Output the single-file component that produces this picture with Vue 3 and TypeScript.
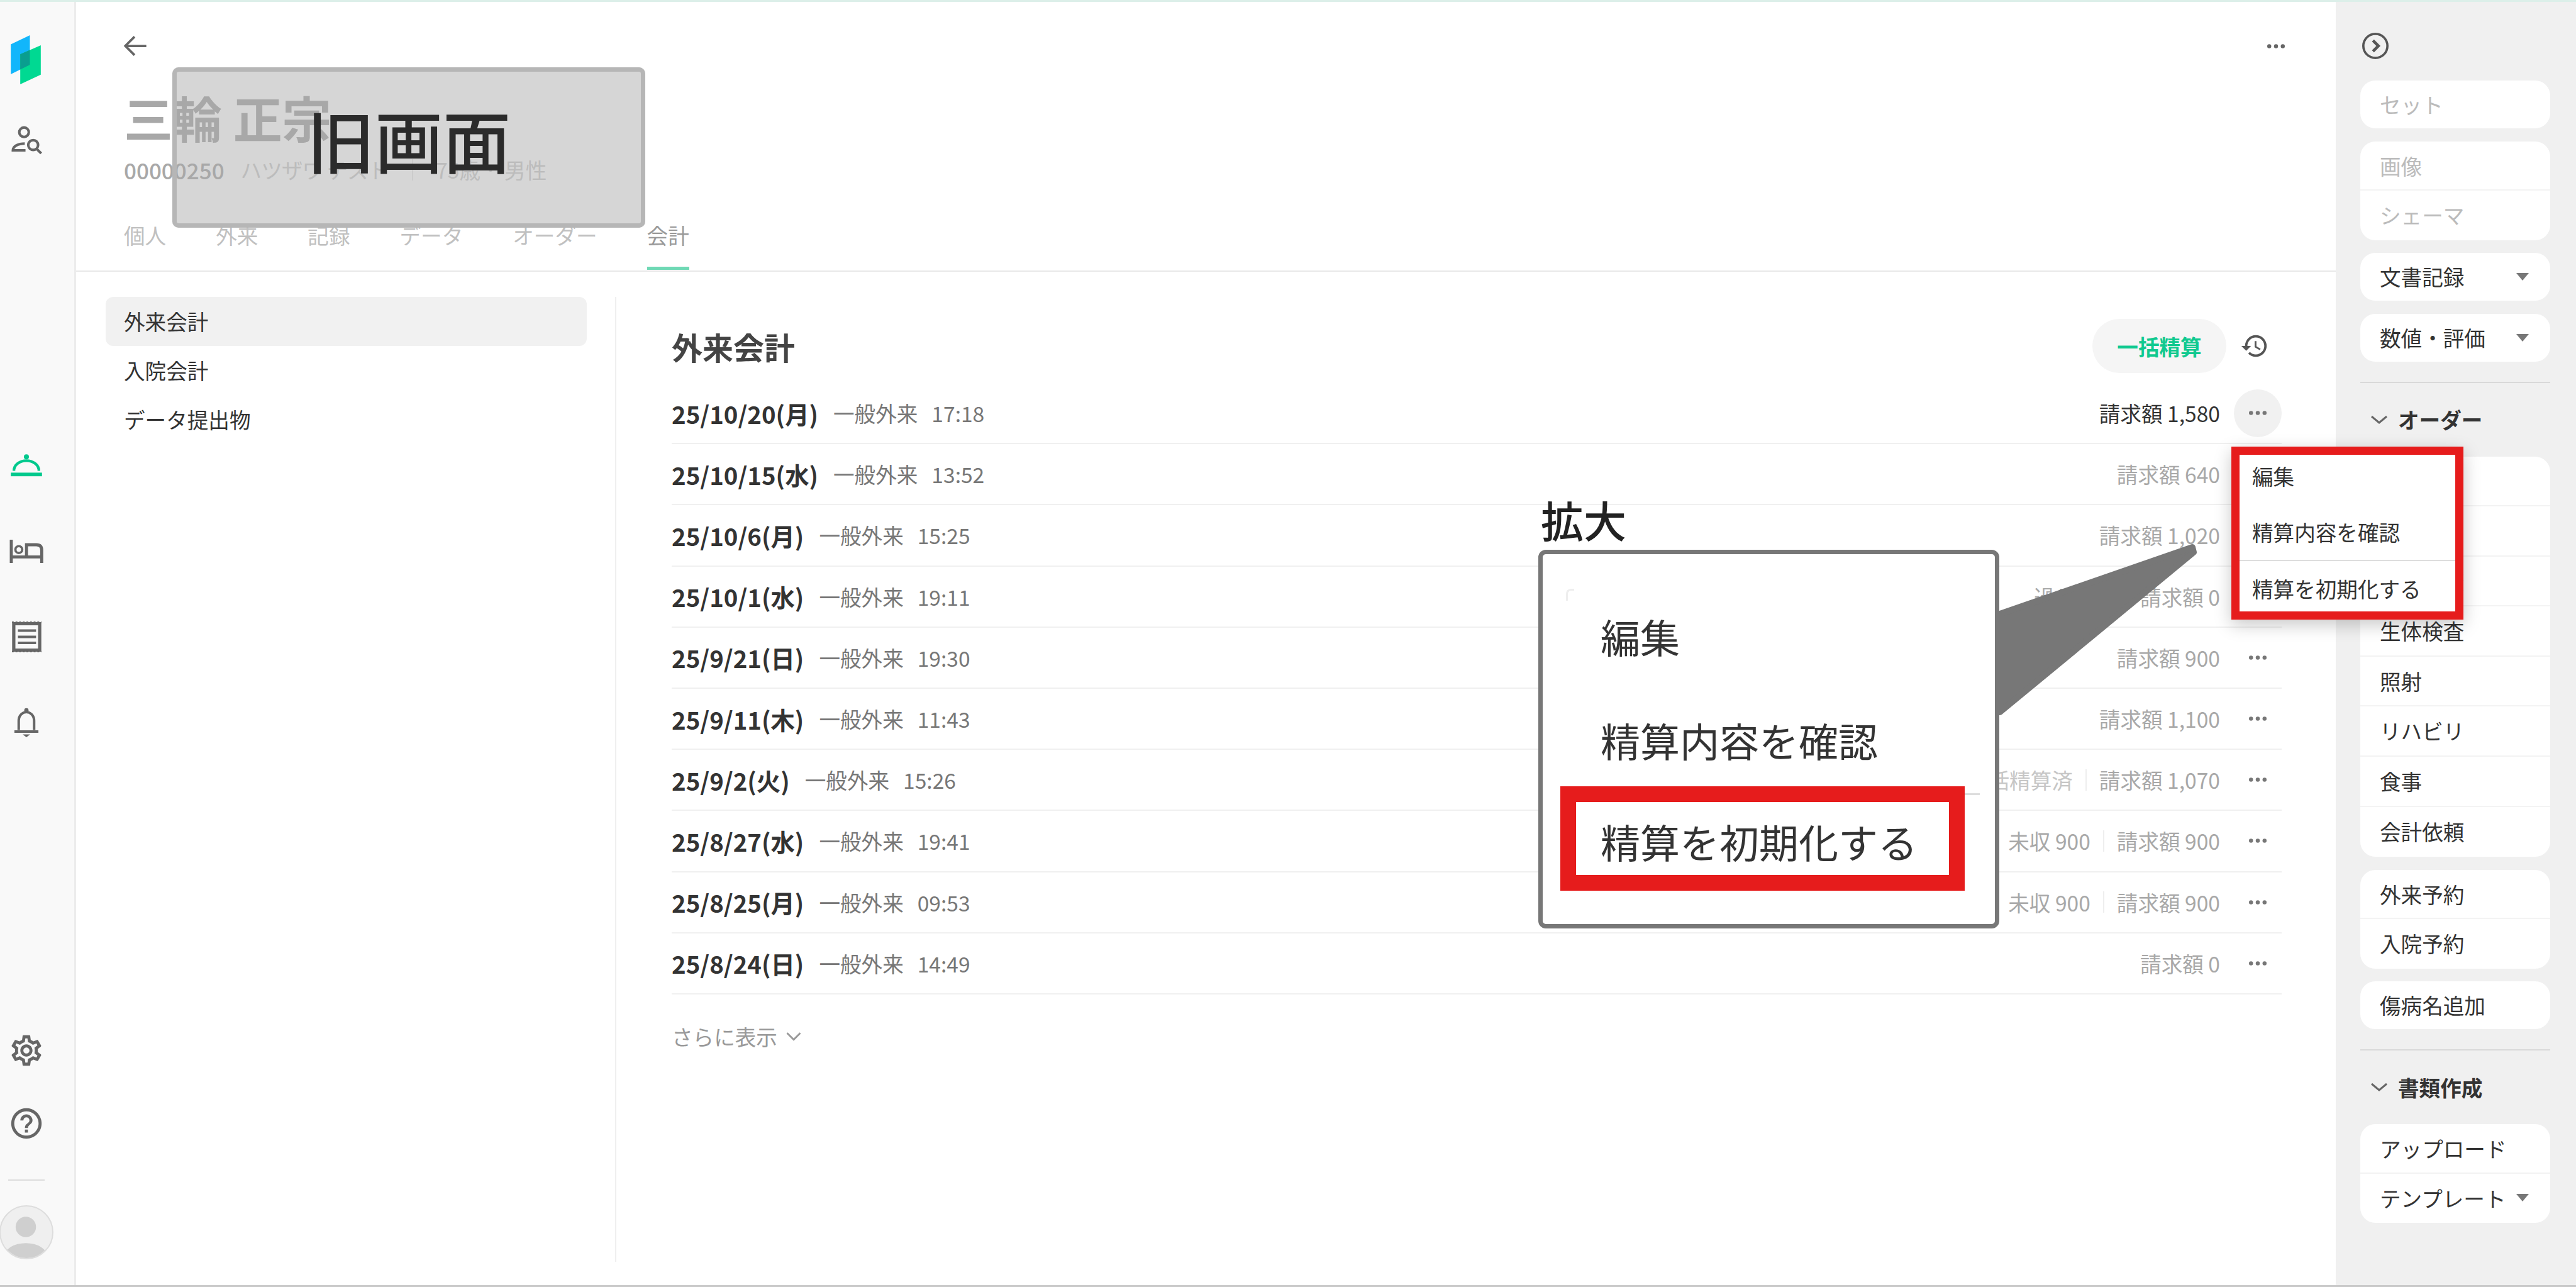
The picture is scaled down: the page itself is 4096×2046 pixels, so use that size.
<script setup lang="ts">
interface Visit {
  date: string
  time: string
  amount: string
  extra?: string
  faint?: boolean
}

const tabs = ['個人', '外来', '記録', 'データ', 'オーダー', '会計']
const subNav = ['外来会計', '入院会計', 'データ提出物']

const visits: Visit[] = [
  { date: '25/10/20(月)', time: '17:18', amount: '1,580' },
  { date: '25/10/15(水)', time: '13:52', amount: '640' },
  { date: '25/10/6(月)', time: '15:25', amount: '1,020' },
  { date: '25/10/1(水)', time: '19:11', amount: '0', extra: '過入金 0' },
  { date: '25/9/21(日)', time: '19:30', amount: '900' },
  { date: '25/9/11(木)', time: '11:43', amount: '1,100' },
  { date: '25/9/2(火)', time: '15:26', amount: '1,070', extra: '一括精算済', faint: true },
  { date: '25/8/27(水)', time: '19:41', amount: '900', extra: '未収 900' },
  { date: '25/8/25(月)', time: '09:53', amount: '900', extra: '未収 900' },
  { date: '25/8/24(日)', time: '14:49', amount: '0' },
]

const orderItems = ['処方', '注射', '検体検査', '生体検査', '照射', 'リハビリ', '食事', '会計依頼']
</script>

<template>
  <div class="app">
    <div class="top-line"></div>
    <div class="frame">
      <aside class="rail">
        <svg class="logo" viewBox="60 75 165 270">
          <polygon points="60,125 165,75 165,238 60,290" fill="#12b6fb" />
          <polygon points="112,180 225,130 225,292 112,345" fill="#00d992" />
          <polygon points="112,180 165,156 165,238 112,264" fill="#0a9e8f" />
        </svg>
        <div class="rail-item search-item">
          <svg class="search-ico" viewBox="55 575 172 158" fill="none" stroke="#666" stroke-width="14">
            <circle cx="128" cy="610" r="26" />
            <path d="M132 672C96 672 67 686 67 709H136" />
            <circle cx="178" cy="680" r="27" />
            <path d="M198 702l24 24" />
          </svg>
        </div>
        <div class="rail-item tray-item">
          <svg class="tray" viewBox="0 0 172 125" fill="none" stroke="#00c98d">
            <path d="M17 92C17 58 50 36 86 36S155 58 155 92" stroke-width="15" />
            <circle cx="86" cy="15" r="14" fill="#00c98d" stroke="none" />
            <rect x="0" y="102" width="172" height="20" fill="#00c98d" stroke="none" />
          </svg>
        </div>
        <div class="rail-item">
          <svg class="bed" viewBox="45 520 195 130" fill="none" stroke="#666" stroke-width="17">
            <path d="M58 520V650M58 616H228M228 650V578C228 558 218 548 198 548H143V616" />
            <circle cx="100" cy="575" r="19" stroke-width="13" />
          </svg>
        </div>
        <div class="rail-item">
          <svg class="receipt" viewBox="62 40 163 170" fill="none" stroke="#666">
            <rect x="72" y="52" width="143" height="146" stroke-width="18" />
            <path d="M62 44H225M62 206H225" stroke-width="8" stroke-dasharray="10 10" />
            <path d="M95 90H195M95 125H195M95 158H195" stroke-width="14" />
          </svg>
        </div>
        <div class="rail-item">
          <svg class="bell" viewBox="75 515 140 165" fill="none" stroke="#666" stroke-width="14">
            <path d="M102 640V588C102 558 122 540 145 540S188 558 188 588V640" />
            <path d="M78 648H212" />
            <circle cx="145" cy="530" r="12" fill="#666" stroke="none" />
            <path d="M124 664H166L145 680z" fill="#666" stroke="none" />
          </svg>
        </div>
        <div class="rail-bottom">
          <div class="rail-item short">
            <svg class="ico" viewBox="0 0 24 24" fill="#666">
              <path d="M19.43 12.98c.04-.32.07-.64.07-.98 0-.34-.03-.66-.07-.98l2.11-1.65c.19-.15.24-.42.12-.64l-2-3.46a.5.5 0 0 0-.61-.22l-2.49 1c-.52-.4-1.08-.73-1.69-.98l-.38-2.65A.488.488 0 0 0 14 2h-4c-.25 0-.46.18-.49.42l-.38 2.65c-.61.25-1.17.59-1.69.98l-2.49-1a.566.566 0 0 0-.18-.03c-.17 0-.34.09-.43.25l-2 3.46c-.13.22-.07.49.12.64l2.11 1.65c-.04.32-.07.65-.07.98 0 .33.03.66.07.98l-2.11 1.65c-.19.15-.24.42-.12.64l2 3.46a.5.5 0 0 0 .61.22l2.49-1c.52.4 1.08.73 1.69.98l.38 2.65c.03.24.24.42.49.42h4c.25 0 .46-.18.49-.42l.38-2.65c.61-.25 1.17-.59 1.69-.98l2.49 1c.06.02.12.03.18.03.17 0 .34-.09.43-.25l2-3.46c.12-.22.07-.49-.12-.64l-2.11-1.65zm-1.98-1.71c.04.31.05.52.05.73 0 .21-.02.43-.05.73l-.14 1.13.89.7 1.08.84-.7 1.21-1.27-.51-1.04-.42-.9.68c-.43.32-.84.56-1.25.73l-1.06.43-.16 1.13-.2 1.35h-1.4l-.19-1.35-.16-1.13-1.06-.43c-.43-.18-.83-.41-1.23-.71l-.91-.7-1.06.43-1.27.51-.7-1.21 1.08-.84.89-.7-.14-1.13c-.03-.31-.05-.54-.05-.74s.02-.43.05-.73l.14-1.13-.89-.7-1.08-.84.7-1.21 1.27.51 1.04.42.9-.68c.43-.32.84-.56 1.25-.73l1.06-.43.16-1.13.2-1.35h1.39l.19 1.35.16 1.13 1.06.43c.43.18.83.41 1.23.71l.91.7 1.06-.43 1.27-.51.7 1.21-1.07.85-.89.7.14 1.13zM12 8c-2.21 0-4 1.79-4 4s1.79 4 4 4 4-1.79 4-4-1.79-4-4-4zm0 6c-1.1 0-2-.9-2-2s.9-2 2-2 2 .9 2 2-.9 2-2 2z" />
            </svg>
          </div>
          <div class="rail-item short">
            <svg class="ico" viewBox="0 0 24 24" fill="#666">
              <path d="M11 18h2v-2h-2v2zm1-16C6.48 2 2 6.48 2 12s4.48 10 10 10 10-4.48 10-10S17.52 2 12 2zm0 18c-4.41 0-8-3.59-8-8s3.59-8 8-8 8 3.59 8 8-3.59 8-8 8zm0-14c-2.21 0-4 1.79-4 4h2c0-1.1.9-2 2-2s2 .9 2 2c0 2-3 1.75-3 5h2c0-2.25 3-2.5 3-5 0-2.21-1.79-4-4-4z" />
            </svg>
          </div>
          <div class="rail-divider"></div>
          <div class="avatar">
            <svg viewBox="0 0 86 86">
              <circle cx="42" cy="34" r="17" fill="#cfcfcf" />
              <ellipse cx="42" cy="84" rx="36" ry="23" fill="#cfcfcf" />
            </svg>
          </div>
        </div>
      </aside>

      <main class="main">
        <header class="header">
          <div class="old-box">
            <span class="old-label">旧画面</span>
          </div>
          <div class="head-row">
            <svg class="back" viewBox="0 0 24 24" fill="none" stroke="#666" stroke-width="1.8">
              <path d="M20 12H4M11 5l-7 7 7 7" />
            </svg>
            <svg class="dots" viewBox="0 0 26 6" fill="#666">
              <circle cx="3" cy="3" r="3" /><circle cx="13" cy="3" r="3" /><circle cx="23" cy="3" r="3" />
            </svg>
          </div>
          <h1 class="name">三輪 正宗</h1>
          <div class="sub">
            <span class="pid">00000250</span>
            <span class="kana">ハツザワ テスト</span>
            <span class="sub-sep"></span>
            <span>75歳</span>
            <span class="sub-dot"></span>
            <span>男性</span>
          </div>
          <nav class="tabs">
            <span v-for="tab in tabs" :key="tab" class="tab" :class="{ active: tab === '会計' }">{{ tab }}</span>
          </nav>
        </header>

        <div class="body">
          <nav class="side-nav">
            <div v-for="(item, i) in subNav" :key="item" class="side-item" :class="{ current: i === 0 }">{{ item }}</div>
          </nav>
          <section class="content">
            <div class="title-row">
              <h2 class="title">外来会計</h2>
              <button class="bulk">一括精算</button>
              <svg class="history" viewBox="0 0 24 24" fill="#555">
                <path d="M13 3a9 9 0 0 0-9 9H1l3.89 3.89.07.14L9 12H6c0-3.87 3.13-7 7-7s7 3.13 7 7-3.13 7-7 7c-1.93 0-3.68-.79-4.94-2.06l-1.42 1.42A8.954 8.954 0 0 0 13 21a9 9 0 0 0 0-18zm-1 5v5l4.28 2.54.72-1.21-3.5-2.08V8H12z" />
              </svg>
            </div>
            <div v-for="(v, i) in visits" :key="v.date" class="visit">
              <span class="date">{{ v.date }}</span>
              <span class="kind">一般外来</span>
              <span class="time">{{ v.time }}</span>
              <span class="spacer"></span>
              <template v-if="v.extra">
                <span class="extra" :class="{ faint: v.faint }">{{ v.extra }}</span>
                <span class="extra-sep"></span>
              </template>
              <span class="amount" :class="{ dark: i === 0 }">請求額 {{ v.amount }}</span>
              <span class="more" :class="{ open: i === 0 }">
                <svg class="dots" viewBox="0 0 26 6" fill="#777">
                  <circle cx="3" cy="3" r="3" /><circle cx="13" cy="3" r="3" /><circle cx="23" cy="3" r="3" />
                </svg>
              </span>
            </div>
            <div class="show-more">
              さらに表示
              <svg viewBox="0 0 24 24" fill="none" stroke="#999" stroke-width="2.4">
                <path d="M3 7l9 9 9-9" />
              </svg>
            </div>
          </section>
        </div>
      </main>

      <aside class="panel">
        <svg class="collapse" viewBox="0 0 24 24" fill="none" stroke="#555" stroke-width="1.9">
          <circle cx="12" cy="12" r="10" />
          <path d="M10 7.5l4.5 4.5-4.5 4.5" stroke-width="2.4" />
        </svg>
        <div class="group first single">
          <div class="g-row off">セット</div>
        </div>
        <div class="group">
          <div class="g-row off">画像</div>
          <div class="g-row off">シェーマ</div>
        </div>
        <div class="group single">
          <div class="g-row">文書記録<i class="caret"></i></div>
        </div>
        <div class="group single">
          <div class="g-row">数値・評価<i class="caret"></i></div>
        </div>
        <div class="rule"></div>
        <div class="section-head">
          <svg viewBox="0 0 28 16" fill="none" stroke="#666" stroke-width="3"><path d="M2 3l12 10L26 3" /></svg>
          オーダー
        </div>
        <div class="group tall">
          <div v-for="item in orderItems" :key="item" class="g-row">{{ item }}</div>
        </div>
        <div class="group">
          <div class="g-row">外来予約</div>
          <div class="g-row">入院予約</div>
        </div>
        <div class="group single">
          <div class="g-row">傷病名追加</div>
        </div>
        <div class="rule"></div>
        <div class="section-head">
          <svg viewBox="0 0 28 16" fill="none" stroke="#666" stroke-width="3"><path d="M2 3l12 10L26 3" /></svg>
          書類作成
        </div>
        <div class="group">
          <div class="g-row">アップロード</div>
          <div class="g-row">テンプレート<i class="caret"></i></div>
        </div>
      </aside>
    </div>
    <div class="bottom-line"></div>

    <!-- annotations laid over the screenshot -->
    <div class="popup">
      <div class="popup-item">編集</div>
      <div class="popup-item">精算内容を確認</div>
      <div class="popup-item split">精算を初期化する</div>
    </div>

    <svg class="pointer" viewBox="0 0 330 280">
      <polygon points="10,116 316,10 318,18 10,272" fill="#777" stroke="#777" stroke-width="10" stroke-linejoin="round" />
    </svg>

    <div class="zoom-label">拡大</div>
    <div class="zoom-box">
      <span class="zoom-corner"></span>
      <span class="zoom-stub"></span>
      <div class="zoom-item">編集</div>
      <div class="zoom-item">精算内容を確認</div>
      <div class="zoom-item marked">精算を初期化する</div>
    </div>
  </div>
</template>

<style>
html,
body {
  margin: 0;
  background: #fff;
}
</style>

<style scoped>
.app {
  position: relative;
  width: 4096px;
  height: 2046px;
  overflow: hidden;
  display: flex;
  flex-direction: column;
  font-family: "Noto Sans CJK JP", "Noto Sans", sans-serif;
  font-size: 33.6px;
  color: #333;
  background: #fff;
}

.top-line {
  height: 3px;
  background: #dcefe9;
}

.bottom-line {
  height: 3px;
  background: #c9c9c9;
}

.frame {
  flex: 1;
  display: flex;
  min-height: 0;
}

/* left rail */
.rail {
  width: 121px;
  box-sizing: border-box;
  flex: none;
  display: flex;
  flex-direction: column;
  padding: 53px 0 41px;
  background: #f9f9f9;
  border-right: 3px solid #ececec;
}

.logo {
  width: 48px;
  height: 78px;
  margin-left: 17px;
}

.rail-item {
  width: 84px;
  height: 136px;
  flex: none;
  display: flex;
  align-items: center;
  justify-content: center;
}

.rail-item.short {
  height: 116px;
}

.search-item {
  margin-top: 21px;
}

.tray-item {
  margin-top: 381px;
}

.search-ico {
  width: 50px;
  height: 46px;
}

.ico {
  width: 58px;
  height: 58px;
}

.tray {
  width: 50px;
  height: 36px;
}

.bed {
  width: 56px;
  height: 37px;
}

.receipt {
  width: 47px;
  height: 49px;
}

.bell {
  width: 40px;
  height: 47px;
}

.rail-bottom {
  margin-top: auto;
}

.rail-divider {
  width: 58px;
  height: 2px;
  margin: 31px 0 39px 13px;
  background: #ddd;
}

.avatar {
  width: 86px;
  height: 86px;
  margin-left: -1px;
  border: 2px solid #ddd;
  border-radius: 50%;
  box-sizing: border-box;
  overflow: hidden;
  background: #efefef;
}

.avatar svg {
  display: block;
  width: 100%;
  height: 100%;
}

/* header */
.main {
  flex: 1;
  min-width: 0;
  display: flex;
  flex-direction: column;
}

.header {
  position: relative;
  height: 429px;
  box-sizing: border-box;
  padding: 49px 81px 0 76px;
  border-bottom: 2px solid #e8e8e8;
  flex: none;
}

.old-box {
  position: absolute;
  left: 153px;
  top: 104px;
  width: 752px;
  height: 255px;
  border-radius: 10px;
  background: #d6d6d6;
}

/* the frame sits above the faded text, the fill below it */
.old-box::after {
  content: "";
  position: absolute;
  z-index: 2;
  inset: 0;
  border: 7px solid #b6b6b6;
  border-radius: 10px;
}

.old-label {
  position: absolute;
  z-index: 2;
  left: 214px;
  top: 38px;
  font-size: 108px;
  font-weight: 500;
  line-height: 150px;
  color: #2b2b2b;
  white-space: nowrap;
}

.head-row {
  height: 42px;
  display: flex;
  align-items: center;
  justify-content: space-between;
}

.back {
  width: 50px;
  height: 50px;
  margin-left: -6px;
}

.dots {
  display: block;
  width: 28px;
  height: 7px;
}

.name {
  position: relative;
  z-index: 1;
  margin: 54px 0 0;
  font-size: 78px;
  line-height: 76px;
  font-weight: 700;
  color: #a8a8a8;
}

.sub {
  position: relative;
  z-index: 1;
  margin-top: 26px;
  height: 40px;
  display: flex;
  align-items: center;
  font-size: 33.6px;
  line-height: 40px;
  color: #bcbcbc;
  white-space: nowrap;
}

.pid {
  font-size: 35px;
  font-weight: 500;
  color: #a8a8a8;
}

.kana {
  margin-left: 26px;
  letter-spacing: -1px;
}

.sub-sep {
  width: 2px;
  height: 34px;
  margin: 0 36px 0 38px;
  background: #cbcbcb;
}

.sub-dot {
  width: 6px;
  height: 6px;
  margin: 0 19px 0 13px;
  border-radius: 50%;
  background: #bcbcbc;
}

.tabs {
  position: relative;
  z-index: 1;
  display: flex;
  gap: 79px;
  margin-top: 60px;
}

.tab {
  height: 79px;
  box-sizing: border-box;
  line-height: 48px;
  color: #c0c0c0;
  white-space: nowrap;
}

.tab.active {
  color: #999;
  border-bottom: 5px solid #6fd9b5;
}

/* body */
.body {
  flex: 1;
  min-height: 0;
  display: flex;
  padding: 40px 0 37px;
}

.side-nav {
  width: 859px;
  box-sizing: border-box;
  flex: none;
  padding: 0 45px 0 47px;
  border-right: 2px solid #efefef;
}

.side-item {
  height: 78px;
  padding-left: 29px;
  line-height: 78px;
  border-radius: 12px;
  color: #333;
}

.side-item.current {
  background: #f1f1f1;
}

.content {
  flex: 1;
  min-width: 0;
  padding: 35px 86px 0 88px;
}

.title-row {
  height: 86px;
  margin-bottom: 16px;
  padding-right: 20px;
  display: flex;
  align-items: center;
}

.title {
  flex: 1;
  margin: 0;
  font-size: 49px;
  font-weight: 700;
  color: #444;
}

.bulk {
  width: 213px;
  height: 86px;
  margin-right: 22px;
  padding: 0;
  border: none;
  border-radius: 43px;
  font: inherit;
  font-weight: 700;
  color: #10c98f;
  background: #f5f5f5;
}

.history {
  width: 46px;
  height: 46px;
}

.visit {
  height: 97.2px;
  box-sizing: border-box;
  display: flex;
  align-items: center;
  border-bottom: 2px solid #f0f0f0;
  white-space: nowrap;
}

.date {
  font-size: 38.4px;
  font-weight: 700;
  color: #333;
}

.kind {
  margin-left: 24px;
  color: #777;
}

.time {
  margin-left: 22px;
  color: #777;
}

.spacer {
  flex: 1;
}

.extra {
  color: #a8a8a8;
}

.extra.faint {
  color: #c6c6c6;
}

.extra-sep {
  width: 2px;
  height: 34px;
  margin: 0 20px;
  background: #eee;
}

.amount {
  color: #a8a8a8;
}

.amount.dark {
  color: #333;
}

.more {
  width: 76px;
  height: 76px;
  margin-left: 22px;
  border-radius: 50%;
  display: flex;
  align-items: center;
  justify-content: center;
}

.more.open {
  background: #f1f1f1;
}

.show-more {
  margin-top: 45px;
  height: 44px;
  display: flex;
  align-items: center;
  gap: 12px;
  line-height: 44px;
  color: #999;
}

.show-more svg {
  width: 28px;
  height: 28px;
}

/* right panel */
.panel {
  width: 382px;
  box-sizing: border-box;
  flex: none;
  padding: 51px 41px 0 39px;
  background: #f0f0f0;
}

.collapse {
  display: block;
  width: 46px;
  height: 46px;
  margin: -4px 0 -4px 1px;
}

.group {
  margin-bottom: 20.5px;
  border-radius: 24px;
  background: #fff;
  overflow: hidden;
}

.group.first {
  margin-top: 36px;
}

.g-row {
  position: relative;
  height: 78.5px;
  box-sizing: border-box;
  padding-left: 31px;
  line-height: 78px;
  color: #333;
  border-bottom: 2px solid #f3f3f3;
  white-space: nowrap;
}

.g-row:last-child {
  border-bottom: none;
}

.single .g-row {
  height: 76px;
  line-height: 76px;
}

.tall .g-row {
  height: 79.6px;
}

.g-row.off {
  color: #bbb;
}

.caret {
  position: absolute;
  right: 34px;
  top: 32px;
  width: 0;
  height: 0;
  border-left: 10px solid transparent;
  border-right: 10px solid transparent;
  border-top: 12px solid #777;
}

.rule {
  height: 2px;
  margin-top: 32px;
  background: #d9d9d9;
}

.section-head {
  height: 60px;
  margin: 28px 0 29px;
  padding-left: 16px;
  display: flex;
  align-items: center;
  gap: 16px;
  font-weight: 700;
  color: #333;
}

.section-head svg {
  width: 28px;
  height: 16px;
}

/* annotations */
.popup {
  position: absolute;
  left: 3548px;
  top: 710px;
  width: 369px;
  height: 275px;
  box-sizing: border-box;
  padding: 12px 20px;
  border: 13px solid #e61c1c;
  background: #fff;
  box-shadow: 0 8px 26px rgba(0, 0, 0, 0.22);
  white-space: nowrap;
}

.popup-item {
  height: 44px;
  line-height: 44px;
}

.popup-item + .popup-item {
  margin-top: 45px;
}

.popup-item.split {
  position: relative;
  margin-top: 46px;
}

.popup-item.split::before {
  content: "";
  position: absolute;
  left: -20px;
  right: -20px;
  top: -24px;
  height: 2px;
  background: #ddd;
}

.pointer {
  position: absolute;
  left: 3170px;
  top: 860px;
  width: 330px;
  height: 280px;
}

.zoom-label {
  position: absolute;
  left: 2450px;
  top: 781px;
  font-size: 68px;
  font-weight: 500;
  line-height: 90px;
  color: #222;
}

.zoom-box {
  position: absolute;
  left: 2446px;
  top: 874px;
  width: 733px;
  height: 602px;
  box-sizing: border-box;
  padding: 85px 0 0 92px;
  border: 7px solid #777;
  border-radius: 12px;
  background: #fff;
  font-size: 63px;
  color: #333;
  white-space: nowrap;
}

.zoom-corner {
  position: absolute;
  left: 37px;
  top: 55px;
  width: 10px;
  height: 16px;
  border-top: 3px solid #eee;
  border-left: 3px solid #eee;
  border-top-left-radius: 8px;
}

.zoom-stub {
  position: absolute;
  left: 60px;
  top: 380px;
  width: 635px;
  height: 3px;
  background: #ddd;
}

.zoom-item {
  height: 90px;
  line-height: 90px;
}

.zoom-item + .zoom-item {
  margin-top: 75px;
}

.zoom-item.marked {
  position: relative;
  width: 643px;
  height: 166px;
  box-sizing: border-box;
  margin: 29px 0 0 -64px;
  padding-left: 39px;
  border: 25px solid #e61c1c;
  line-height: 124px;
  background: #fff;
}
</style>
